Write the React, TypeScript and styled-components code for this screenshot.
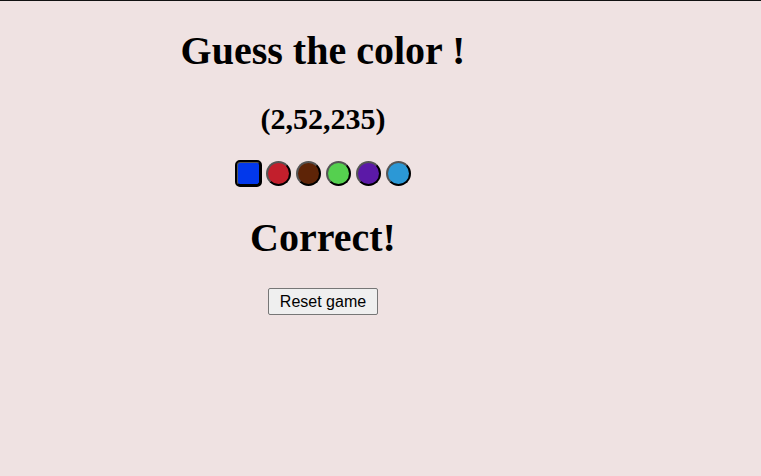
import React, { useState } from 'react'
import styled, { createGlobalStyle } from 'styled-components'

const GlobalStyle = createGlobalStyle`
  html, body {
    margin: 0;
    padding: 0;
    background: #efe2e2;
  }
  body {
    border-top: 1px solid #111;
    min-height: 475px;
    font-family: "Liberation Serif", "Times New Roman", serif;
  }
`

const Game = styled.div`
  width: 630px;
  margin-left: 8px;
  text-align: center;
`

const Title = styled.h1`
  font-size: 40px;
  line-height: 46px;
  margin: 0;
  padding-top: 27px;
`

const Target = styled.h2`
  font-size: 30px;
  line-height: 34px;
  margin: 28px 0 0;
`

const Swatches = styled.div`
  display: flex;
  justify-content: center;
  gap: 5px;
  margin-top: 25px;
`

const Swatch = styled.button<{ $color: string; $picked?: boolean }>`
  width: 25px;
  height: 25px;
  padding: 0;
  background: ${({ $color }) => $color};
  border: 2px outset #555;
  border-radius: ${({ $picked }) => ($picked ? '4px' : '50%')};
  outline: ${({ $picked }) => ($picked ? '2px solid #000' : 'none')};
  outline-offset: -1px;
  cursor: pointer;
`

const Result = styled.h1`
  font-size: 40px;
  line-height: 46px;
  margin: 29px 0 0;
`

const Actions = styled.div`
  margin-top: 27px;
`

const ResetButton = styled.button`
  font-family: "Liberation Sans", Arial, sans-serif;
  font-size: 16px;
  line-height: 19px;
  padding: 3px 11px;
  background: #efefef;
  color: #000;
  border: 1px solid #767676;
  border-radius: 2px;
  vertical-align: top;
`

const colors = ['#0238eb', '#c21f2c', '#5e2407', '#55d04f', '#5b19a7', '#2b98d6']

export default function App() {
  const [picked, setPicked] = useState(0)
  return (
    <>
      <GlobalStyle />
      <Game>
        <Title>Guess the color !</Title>
        <Target>(2,52,235)</Target>
        <Swatches>
          {colors.map((c, i) => (
            <Swatch key={c} $color={c} $picked={picked === i} onClick={() => setPicked(i)} />
          ))}
        </Swatches>
        <Result>Correct!</Result>
        <Actions>
          <ResetButton onClick={() => setPicked(0)}>Reset game</ResetButton>
        </Actions>
      </Game>
    </>
  )
}
